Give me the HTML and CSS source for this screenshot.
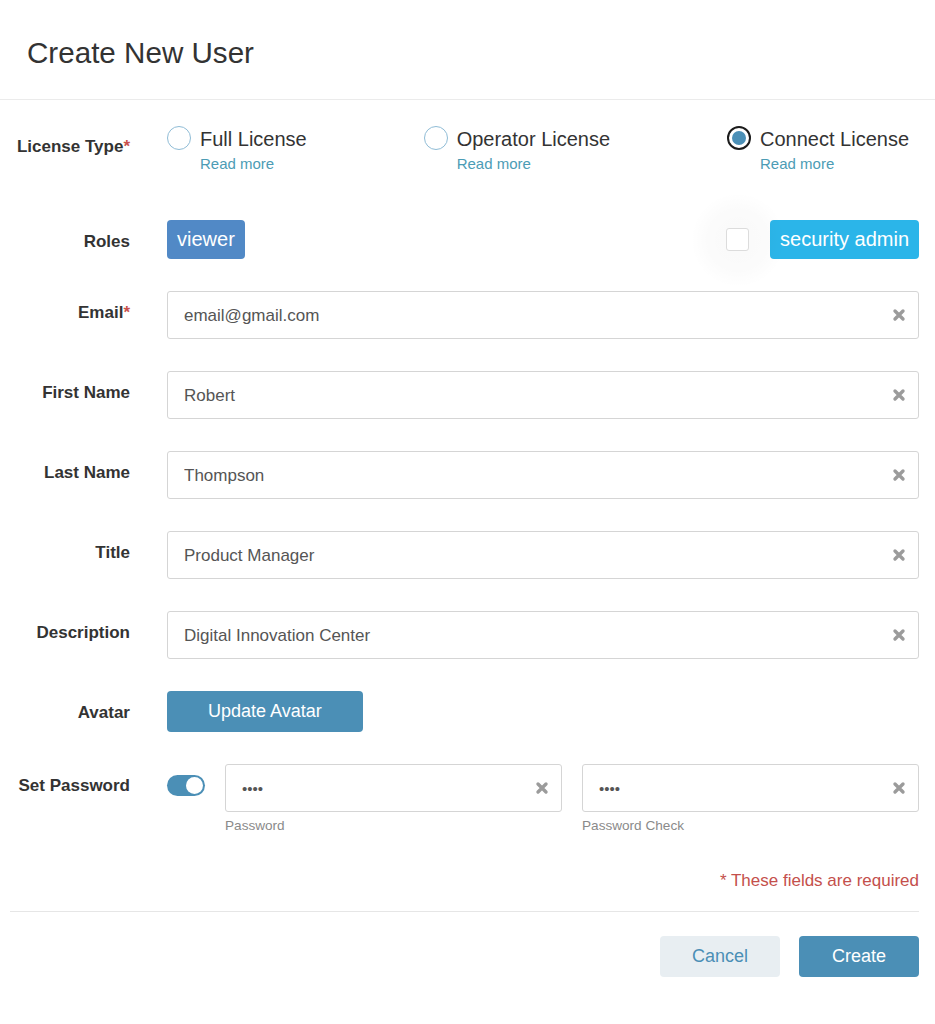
FILE: index.html
```html
<!DOCTYPE html>
<html lang="en">
<head>
<meta charset="utf-8">
<title>Create New User</title>
<link rel="stylesheet" href="styles.css">
</head>
<body>
<div class="modal">
  <header class="header">
    <h1 class="title">Create New User</h1>
  </header>
  <form class="form">
    <div class="row row-license">
      <label class="label">License Type<span class="req">*</span></label>
      <div class="licenses">
        <div class="lic">
          <div class="lic-line"><span class="radio"></span><span class="lic-name">Full License</span></div>
          <a class="read">Read more</a>
        </div>
        <div class="lic">
          <div class="lic-line"><span class="radio"></span><span class="lic-name">Operator License</span></div>
          <a class="read">Read more</a>
        </div>
        <div class="lic">
          <div class="lic-line"><span class="radio checked"><span class="dot"></span></span><span class="lic-name">Connect License</span></div>
          <a class="read">Read more</a>
        </div>
      </div>
    </div>

    <div class="row row-roles">
      <label class="label">Roles</label>
      <div class="roles">
        <span class="chip chip-viewer">viewer</span>
        <div class="role-right">
          <span class="check-wrap"><span class="checkbox"></span></span>
          <span class="chip chip-sec">security admin</span>
        </div>
      </div>
    </div>

    <div class="row">
      <label class="label">Email<span class="req">*</span></label>
      <div class="field"><input class="input" type="text" value="email@gmail.com"><svg class="clear" viewBox="0 0 14 14"><path d="M3 3L11 11M11 3L3 11"/></svg></div>
    </div>

    <div class="row">
      <label class="label">First Name</label>
      <div class="field"><input class="input" type="text" value="Robert"><svg class="clear" viewBox="0 0 14 14"><path d="M3 3L11 11M11 3L3 11"/></svg></div>
    </div>

    <div class="row">
      <label class="label">Last Name</label>
      <div class="field"><input class="input" type="text" value="Thompson"><svg class="clear" viewBox="0 0 14 14"><path d="M3 3L11 11M11 3L3 11"/></svg></div>
    </div>

    <div class="row">
      <label class="label">Title</label>
      <div class="field"><input class="input" type="text" value="Product Manager"><svg class="clear" viewBox="0 0 14 14"><path d="M3 3L11 11M11 3L3 11"/></svg></div>
    </div>

    <div class="row">
      <label class="label">Description</label>
      <div class="field"><input class="input" type="text" value="Digital Innovation Center"><svg class="clear" viewBox="0 0 14 14"><path d="M3 3L11 11M11 3L3 11"/></svg></div>
    </div>

    <div class="row">
      <label class="label">Avatar</label>
      <div class="avatar-ctl"><button type="button" class="btn btn-primary btn-avatar">Update Avatar</button></div>
    </div>

    <div class="row row-pass">
      <label class="label">Set Password</label>
      <div class="pass">
        <span class="toggle"><span class="knob"></span></span>
        <div class="pass-group">
          <div class="field"><span class="dots">••••</span><svg class="clear" viewBox="0 0 14 14"><path d="M3 3L11 11M11 3L3 11"/></svg></div>
          <div class="sub">Password</div>
        </div>
        <div class="pass-group">
          <div class="field"><span class="dots">••••</span><svg class="clear" viewBox="0 0 14 14"><path d="M3 3L11 11M11 3L3 11"/></svg></div>
          <div class="sub">Password Check</div>
        </div>
      </div>
    </div>

    <div class="required">* These fields are required</div>
    <div class="divider"></div>
    <div class="actions">
      <button type="button" class="btn btn-cancel">Cancel</button>
      <button type="button" class="btn btn-primary">Create</button>
    </div>
  </form>
</div>
</body>
</html>
```

FILE: styles.css
```css
* { box-sizing: border-box; }

body {
  margin: 0;
  background: #ffffff;
  font-family: "Liberation Sans", Arial, sans-serif;
  color: #333333;
}

.header {
  padding: 36px 27px 29px;
  border-bottom: 1px solid #ebebeb;
}

.title {
  margin: 0;
  font-size: 29.6px;
  line-height: 34px;
  font-weight: normal;
  color: #333333;
}

.form {
  display: flex;
  flex-direction: column;
  padding-top: 25px;
}

.row {
  display: grid;
  grid-template-columns: 130px 1fr;
  column-gap: 37px;
  padding-right: 16px;
  margin-bottom: 32px;
  align-items: start;
}

.row-license { margin-bottom: 47px; }
.row-pass { margin-bottom: 37px; }

.label {
  text-align: right;
  font-weight: bold;
  font-size: 17px;
  line-height: 22px;
  padding-top: 11px;
  color: #333333;
  white-space: nowrap;
}

.req { color: #c9504b; }

/* License radios */
.licenses {
  display: flex;
  justify-content: space-between;
  padding-right: 10px;
}

.lic { display: flex; flex-direction: column; }

.lic-line {
  display: flex;
  align-items: center;
  height: 26px;
  gap: 9px;
}

.radio {
  width: 24px;
  height: 24px;
  border-radius: 50%;
  border: 1px solid #8fbcd6;
  background: #fff;
  display: flex;
  align-items: center;
  justify-content: center;
  flex: none;
}

.radio.checked {
  border: 2.5px solid #1b1b1b;
}

.dot {
  width: 14px;
  height: 14px;
  border-radius: 50%;
  background: #4b8fb6;
}

.lic-name {
  font-size: 20px;
  line-height: 26px;
  padding-top: 2px;
  color: #333333;
}

.read {
  margin-top: 4px;
  margin-left: 33px;
  font-size: 15px;
  line-height: 18px;
  color: #4c9cb5;
  cursor: pointer;
}

/* Roles */
.roles {
  display: flex;
  justify-content: space-between;
  align-items: center;
}

.chip {
  display: inline-block;
  font-size: 20px;
  line-height: 23px;
  padding: 8px 10px;
  border-radius: 4px;
  color: #ffffff;
}

.chip-viewer { background: #5189c6; }
.chip-sec { background: #2bb5e9; }

.role-right {
  display: flex;
  align-items: center;
  gap: 21px;
}

.check-wrap {
  position: relative;
  display: flex;
}

.check-wrap::before {
  content: "";
  position: absolute;
  left: 50%;
  top: 50%;
  width: 96px;
  height: 96px;
  margin: -48px 0 0 -48px;
  border-radius: 50%;
  background: radial-gradient(circle, rgba(0,0,0,0.022) 0%, rgba(0,0,0,0.015) 45%, rgba(0,0,0,0) 70%);
}

.checkbox {
  position: relative;
  width: 23px;
  height: 23px;
  border: 1px solid #dcdcdc;
  border-radius: 3px;
  background: #ffffff;
}

/* Inputs */
.field {
  display: flex;
  align-items: center;
  height: 48px;
  border: 1px solid #d5d5d5;
  border-radius: 3px;
  padding: 0 12px 0 16px;
  background: #fff;
}

.input {
  flex: 1;
  min-width: 0;
  border: 0;
  outline: 0;
  padding: 1px 0 0;
  background: transparent;
  font-family: "Liberation Sans", Arial, sans-serif;
  font-size: 17px;
  color: #555555;
}

.dots {
  flex: 1;
  font-size: 15px;
  color: #555555;
}

.clear {
  width: 14px;
  height: 14px;
  flex: none;
}

.clear path {
  stroke: #9b9b9b;
  stroke-width: 3.4;
  stroke-linecap: round;
  fill: none;
}

/* Buttons */
.btn {
  height: 41px;
  border: 0;
  border-radius: 4px;
  font-family: "Liberation Sans", Arial, sans-serif;
  font-size: 18px;
  cursor: pointer;
}

.btn-primary {
  background: #4b8fb6;
  color: #ffffff;
}

.btn-avatar { padding: 0 41px; }

.btn-cancel {
  background: #e8eef2;
  color: #4b8fb6;
}

.actions .btn { width: 120px; }

/* Password */
.pass {
  display: flex;
  align-items: flex-start;
  gap: 20px;
}

.toggle {
  flex: none;
  margin-top: 11px;
  width: 38px;
  height: 21px;
  border-radius: 11px;
  background: #4b8fb6;
  display: flex;
  justify-content: flex-end;
  align-items: center;
  padding: 0 2px;
}

.knob {
  width: 17px;
  height: 17px;
  border-radius: 50%;
  background: #ffffff;
}

.pass-group {
  flex: 1;
  display: flex;
  flex-direction: column;
}

.sub {
  margin-top: 6px;
  font-size: 13.6px;
  line-height: 16px;
  color: #8a8a8a;
}

.required {
  text-align: right;
  padding-right: 16px;
  font-size: 17px;
  line-height: 20px;
  color: #c4504c;
  margin-bottom: 20px;
}

.divider {
  margin: 0 16px 0 10px;
  border-top: 1px solid #e6e6e6;
}

.actions {
  display: flex;
  justify-content: flex-end;
  gap: 19px;
  padding-right: 16px;
  margin-top: 24px;
}
```
